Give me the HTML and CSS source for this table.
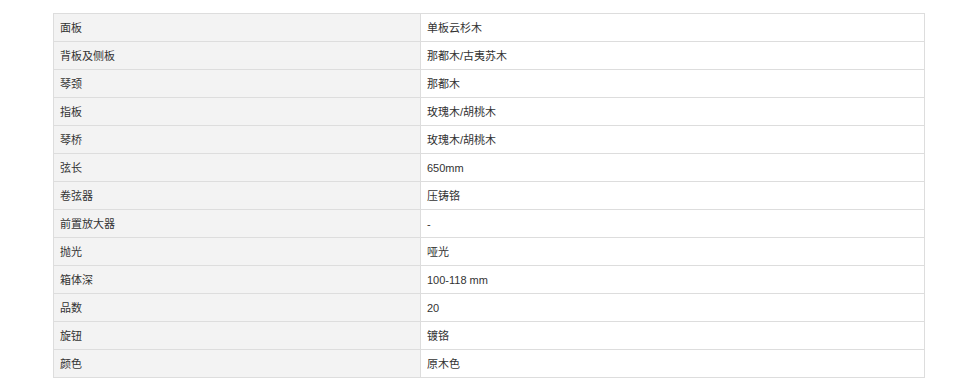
FILE: index.html
```html
<!DOCTYPE html>
<html lang="zh">
<head>
<meta charset="utf-8">
<link rel="stylesheet" href="styles.css">
</head>
<body>
<div class="wrap">
<table class="spec">
<tbody>
<tr><td class="k">面板</td><td class="v">单板云杉木</td></tr>
<tr><td class="k">背板及侧板</td><td class="v">那都木/古夷苏木</td></tr>
<tr><td class="k">琴颈</td><td class="v">那都木</td></tr>
<tr><td class="k">指板</td><td class="v">玫瑰木/胡桃木</td></tr>
<tr><td class="k">琴桥</td><td class="v">玫瑰木/胡桃木</td></tr>
<tr><td class="k">弦长</td><td class="v">650mm</td></tr>
<tr><td class="k">卷弦器</td><td class="v">压铸铬</td></tr>
<tr><td class="k">前置放大器</td><td class="v">-</td></tr>
<tr><td class="k">抛光</td><td class="v">哑光</td></tr>
<tr><td class="k">箱体深</td><td class="v">100-118 mm</td></tr>
<tr><td class="k">品数</td><td class="v">20</td></tr>
<tr><td class="k">旋钮</td><td class="v">镀铬</td></tr>
<tr><td class="k">颜色</td><td class="v">原木色</td></tr>
</tbody>
</table>
</div>
</body>
</html>
```
FILE: styles.css
```css
html, body {
  margin: 0;
  padding: 0;
  background: #fff;
}
.wrap {
  padding: 13px 0 0 53px;
}
.spec {
  width: 872px;
  border-collapse: collapse;
  font-family: "Liberation Sans", Arial, "Noto Sans CJK SC", sans-serif;
  font-size: 11px;
  color: #333;
}
.spec td {
  border: 1px solid #ddd;
  height: 27px;
  padding: 0 6px;
  vertical-align: middle;
  box-sizing: border-box;
  line-height: 14px;
}
.spec tr {
  height: 28px;
}
.spec .k {
  width: 367px;
  background: #f3f3f3;
}
.spec .v {
  background: #fff;
}
```
